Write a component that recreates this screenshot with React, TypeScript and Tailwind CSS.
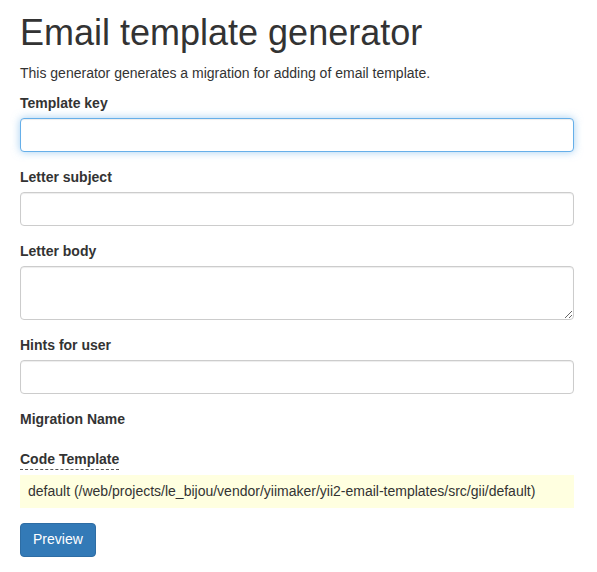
export default function App() {
  const label = "block mb-[5px] text-[14px] leading-[20px] font-bold text-[#333]"
  const input =
    "block w-full h-[34px] px-3 py-1.5 text-[14px] bg-white border border-[#ccc] rounded-[4px] shadow-[inset_0_1px_1px_rgba(0,0,0,0.075)] outline-none"

  return (
    <div className="min-h-screen bg-white pl-5 pr-[23px] text-[#333] font-['Liberation_Sans',Arial,sans-serif]">
      <h1 className="pt-[13px] mb-[10px] text-[36px] leading-[1.1] font-normal">Email template generator</h1>
      <p className="mb-[10px] text-[14px] leading-[20px]">
        This generator generates a migration for adding of email template.
      </p>

      <div className="mb-[15px]">
        <label className={label}>Template key</label>
        <input
          className="block w-full h-[34px] px-3 py-1.5 text-[14px] bg-white border border-[#66afe9] rounded-[4px] shadow-[inset_0_1px_1px_rgba(0,0,0,0.075),0_0_8px_rgba(102,175,233,0.6)] outline-none"
          type="text"
        />
      </div>

      <div className="mb-[15px]">
        <label className={label}>Letter subject</label>
        <input className={input} type="text" />
      </div>

      <div className="mb-[15px]">
        <label className={label}>Letter body</label>
        <textarea
          rows={2}
          className="block w-full h-[54px] px-3 py-1.5 text-[14px] bg-white border border-[#ccc] rounded-[4px] shadow-[inset_0_1px_1px_rgba(0,0,0,0.075)] outline-none resize-y"
        />
      </div>

      <div className="mb-[15px]">
        <label className={label}>Hints for user</label>
        <input className={input} type="text" />
      </div>

      <div className="mb-[18px]">
        <label className={label}>Migration Name</label>
      </div>

      <div className="mb-[15px]">
        <div>
          <label className="inline-block mb-[5px] text-[14px] leading-[20px] font-bold text-[#333] border-b border-dashed border-[#555]">
            Code Template
          </label>
        </div>
        <div className="h-[33px] px-2 py-1.5 bg-[#ffffe0] text-[14px] leading-[20px]">
          default (/web/projects/le_bijou/vendor/yiimaker/yii2-email-templates/src/gii/default)
        </div>
      </div>

      <button className="h-[34px] px-3 text-[14px] text-white bg-[#337ab7] border border-[#2e6da4] rounded-[4px]">
        Preview
      </button>
    </div>
  )
}
